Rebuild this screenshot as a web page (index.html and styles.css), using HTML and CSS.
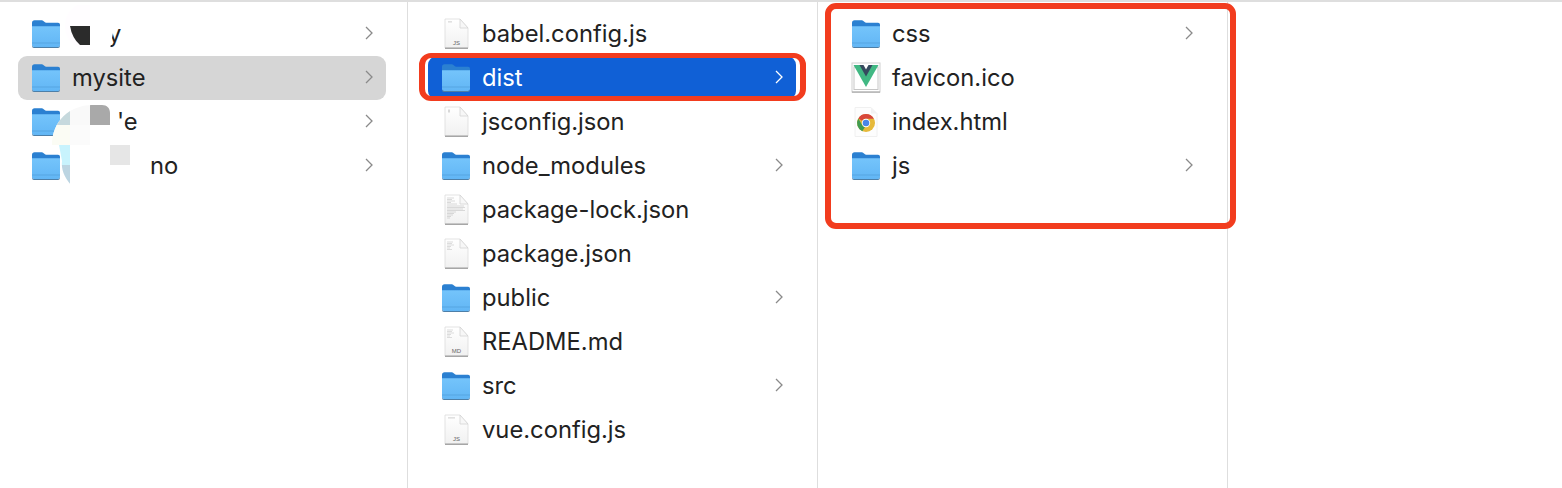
FILE: index.html
```html
<!DOCTYPE html>
<html lang="en">

<head>
    <meta charset="UTF-8">
    <meta name="viewport" content="width=device-width, initial-scale=1.0">
    <title>mysite - Finder</title>
    <link rel="stylesheet" href="styles.css">
</head>

<body>

    <svg class="defs" width="0" height="0" aria-hidden="true">
        <defs>
            <linearGradient id="folderBody" x1="0" y1="0" x2="0" y2="1">
                <stop offset="0" stop-color="#74c4fb"/>
                <stop offset="1" stop-color="#62b6f5"/>
            </linearGradient>
            <linearGradient id="pageBody" x1="0" y1="0" x2="0" y2="1">
                <stop offset="0" stop-color="#ffffff"/>
                <stop offset="1" stop-color="#f1f1f1"/>
            </linearGradient>

            <symbol id="folder" viewBox="0 0 30 29">
                <path d="M1 3.500C1 1.800 2 .8 3.500 .8H11C12.500 .8 13.500 3.300 15 3.300H27C28.200 3.300 29 4.100 29 5.500V10H1Z" fill="#2b80d1"/>
                <path d="M1 6.800H29V25.500C29 26.800 28.200 27.500 27 27.500H3C1.800 27.500 1 26.800 1 25.500Z" fill="url(#folderBody)"/>
                <rect x="1" y="23" width="28" height="1" fill="#56a5e2"/>
                <path d="M1 25.500C1 26.800 1.800 27.500 3 27.500H27C28.200 27.500 29 26.800 29 25.500V26.500C29 27.800 28.200 28.500 27 28.500H3C1.800 28.500 1 27.800 1 26.500Z" fill="#4d7fa8"/>
            </symbol>

            <symbol id="page" viewBox="0 0 26 32">
                <path d="M2 1H17L25 10V30H2Z" fill="url(#pageBody)" stroke="#dcdcdc" stroke-width="0.800"/>
                <path d="M17 1V10H25Z" fill="#f7f7f7" stroke="#d4d4d4" stroke-width="0.800"/>
                <rect x="2" y="29.500" width="23" height="1.500" fill="#a6a6a6"/>
            </symbol>

            <symbol id="lines-long" viewBox="0 0 26 32">
                <path d="M4 4H11M4 5.500H9M4 7H12M4 8.500H8M4 10H14M4 12H21M4 13.500H22M4 15H20M4 16.500H22M4 18H13M4 19.500H11M4 21H10M4 22.500H8M4 24H7" stroke="#c2c2c2" stroke-width="0.600" fill="none"/>
            </symbol>

            <symbol id="lines-short" viewBox="0 0 26 32">
                <path d="M4 4H10M4 5.500H9M4 7H11M4 8.500H8M4 10H7M4 11.500H9" stroke="#c8c8c8" stroke-width="0.600" fill="none"/>
            </symbol>

            <symbol id="chevron" viewBox="0 0 8 14">
                <path d="M1 1L7 7L1 13" fill="none" stroke="currentColor" stroke-width="1.300"/>
            </symbol>
        </defs>
    </svg>

    <main class="browser">

        <section class="column column-first">
            <div class="row">
                <svg class="icon"><use href="#folder"/></svg>
                <span class="name name-y">y</span>
                <svg class="chevron"><use href="#chevron"/></svg>
            </div>
            <div class="row row-inactive">
                <svg class="icon"><use href="#folder"/></svg>
                <span class="name">mysite</span>
                <svg class="chevron"><use href="#chevron"/></svg>
            </div>
            <div class="row">
                <svg class="icon"><use href="#folder"/></svg>
                <span class="name name-e">'e</span>
                <svg class="chevron"><use href="#chevron"/></svg>
            </div>
            <div class="row">
                <svg class="icon"><use href="#folder"/></svg>
                <span class="name name-no">no</span>
                <svg class="chevron"><use href="#chevron"/></svg>
            </div>
        </section>

        <section class="column">
            <div class="row">
                <svg class="icon" viewBox="0 0 26 32">
                    <use href="#page"/>
                    <rect x="5" y="3.500" width="4" height="0.800" fill="#c4c4c4"/>
                    <text class="badge" x="13.500" y="27" text-anchor="middle">JS</text>
                </svg>
                <span class="name">babel.config.js</span>
            </div>
            <div class="row row-active">
                <svg class="icon"><use href="#folder"/></svg>
                <span class="name">dist</span>
                <svg class="chevron"><use href="#chevron"/></svg>
            </div>
            <div class="row">
                <svg class="icon" viewBox="0 0 26 32">
                    <use href="#page"/>
                    <rect x="5" y="3.500" width="2" height="3" fill="#d8d8d8"/>
                </svg>
                <span class="name">jsconfig.json</span>
            </div>
            <div class="row">
                <svg class="icon"><use href="#folder"/></svg>
                <span class="name">node_modules</span>
                <svg class="chevron"><use href="#chevron"/></svg>
            </div>
            <div class="row">
                <svg class="icon" viewBox="0 0 26 32">
                    <use href="#page"/>
                    <use href="#lines-long"/>
                </svg>
                <span class="name">package-lock.json</span>
            </div>
            <div class="row">
                <svg class="icon" viewBox="0 0 26 32">
                    <use href="#page"/>
                    <use href="#lines-short"/>
                </svg>
                <span class="name">package.json</span>
            </div>
            <div class="row">
                <svg class="icon"><use href="#folder"/></svg>
                <span class="name">public</span>
                <svg class="chevron"><use href="#chevron"/></svg>
            </div>
            <div class="row">
                <svg class="icon" viewBox="0 0 26 32">
                    <use href="#page"/>
                    <use href="#lines-short"/>
                    <text class="badge" x="13.500" y="27" text-anchor="middle">MD</text>
                </svg>
                <span class="name">README.md</span>
            </div>
            <div class="row">
                <svg class="icon"><use href="#folder"/></svg>
                <span class="name">src</span>
                <svg class="chevron"><use href="#chevron"/></svg>
            </div>
            <div class="row">
                <svg class="icon" viewBox="0 0 26 32">
                    <use href="#page"/>
                    <rect x="5" y="3.500" width="7" height="0.800" fill="#c4c4c4"/>
                    <text class="badge" x="13.500" y="27" text-anchor="middle">JS</text>
                </svg>
                <span class="name">vue.config.js</span>
            </div>
        </section>

        <section class="column">
            <div class="row">
                <svg class="icon"><use href="#folder"/></svg>
                <span class="name">css</span>
                <svg class="chevron"><use href="#chevron"/></svg>
            </div>
            <div class="row">
                <svg class="icon" viewBox="0 0 30 32">
                    <rect x="1" y="1" width="28" height="29" fill="#fff" stroke="#cfcfcf"/>
                    <rect x="1" y="29.500" width="28" height="1.200" fill="#a8a8a8"/>
                    <rect x="3" y="5" width="24" height="22.500" fill="none" stroke="#c6c6c6"/>
                    <path d="M2.500 3H27.500L15 25Z" fill="#41b883"/>
                    <path d="M8.500 3H21.500L15 14.500Z" fill="#35495e"/>
                    <path d="M12.500 3H17.500L15 7.500Z" fill="#fff"/>
                </svg>
                <span class="name">favicon.ico</span>
            </div>
            <div class="row">
                <svg class="icon" viewBox="0 0 30 32">
                    <path d="M4 1.500H20L26 7.500V30.500H4Z" fill="#fdfdfd" stroke="#f0f0f0"/>
                    <path d="M20 1.500V7.500H26Z" fill="#f2f2f2"/>
                    <circle cx="15" cy="17" r="9" fill="#e6b93a"/>
                    <path d="M15 8A9 9 0 0 1 23 12.800H15A4.200 4.200 0 0 0 11 14.800L7.300 12.400A9 9 0 0 1 15 8Z" fill="#d8473b"/>
                    <path d="M7.300 12.400L11.300 19.300A4.200 4.200 0 0 0 14 21L11.300 25.200A9 9 0 0 1 7.300 12.400Z" fill="#3f9b52"/>
                    <circle cx="15" cy="17" r="4.200" fill="#fff"/>
                    <circle cx="15" cy="17" r="3.300" fill="#4a86e8"/>
                </svg>
                <span class="name">index.html</span>
            </div>
            <div class="row">
                <svg class="icon"><use href="#folder"/></svg>
                <span class="name">js</span>
                <svg class="chevron"><use href="#chevron"/></svg>
            </div>
        </section>

        <section class="column column-empty"></section>

        <!-- annotations drawn over the screenshot -->
        <div class="mark mark-dist"></div>
        <div class="mark mark-output"></div>

        <!-- redactions over the first column -->
        <svg class="blot blot-dark" viewBox="0 0 50 46">
            <circle cx="25" cy="21" r="24" fill="#fffdff"/>
            <path d="M6 21H26V40H16Q8 33 6 21Z" fill="#2b2b2b"/>
            <path d="M26 0H50V22L46 44H26Z" fill="#fff"/>
        </svg>
        <svg class="blot blot-mosaic" viewBox="0 0 90 80">
            <defs>
                <clipPath id="blotShape">
                    <path d="M0 40C0 16 18 0 40 0H50C55 0 58 3 58 8V20H64V40H78V60H90V68C80 76 60 80 40 80H19C12 72 9 64 10 56L7 40Z"/>
                </clipPath>
            </defs>
            <g clip-path="url(#blotShape)">
                <rect width="90" height="80" fill="#fff"/>
                <rect x="0" y="0" width="18" height="20" fill="#c6d9dd"/>
                <rect x="18" y="0" width="20" height="20" fill="#f9f9f9"/>
                <rect x="38" y="0" width="20" height="20" fill="#a9a9a9"/>
                <rect x="0" y="20" width="18" height="20" fill="#fbfcf4"/>
                <rect x="18" y="20" width="20" height="20" fill="#fbfbfb"/>
                <rect x="0" y="40" width="18" height="20" fill="#c8f3fd"/>
                <rect x="0" y="60" width="18" height="20" fill="#bcd5e2"/>
                <rect x="58" y="40" width="20" height="20" fill="#e6e6e6"/>
            </g>
        </svg>
    </main>

</body>

</html>
```

FILE: styles.css
```css
* {
    box-sizing: border-box;
}

html,
body {
    margin: 0;
    padding: 0;
    height: 100%;
    background-color: #fff;
    overflow: hidden;
}

body {
    font-family: 'Inter', 'Liberation Sans', sans-serif;
    color: #222;
}

.defs {
    position: absolute;
}

.browser {
    position: relative;
    display: grid;
    grid-template-columns: 408px 410px 410px 1fr;
    height: 488px;
    border-top: 2px solid #dedede;
}

.column {
    padding: 10px 0 0 20px;
    border-right: 1px solid #dedede;
}

.column-first {
    padding-left: 18px;
}

.column-empty {
    border-right: 0;
}

.row {
    display: flex;
    align-items: center;
    width: 368px;
    height: 44px;
    padding: 0 13px 0 13px;
    border-radius: 9px;
}

.row-inactive {
    background-color: #d6d6d6;
}

.row-active {
    background-color: #1060d6;
    color: #fff;
}

.icon {
    flex: none;
    width: 30px;
    height: 32px;
    margin-right: 11px;
}

.name {
    flex: 1;
    font-size: 23.750px;
    line-height: 44px;
}

.name-y {
    margin-left: 36px;
}

.name-e {
    margin-left: 45px;
}

.name-no {
    margin-left: 78px;
}

.chevron {
    flex: none;
    width: 8px;
    height: 14px;
    margin-bottom: 2px;
    color: #8a8a8a;
}

.row-active .chevron {
    color: #fff;
}

.badge {
    font-family: 'Liberation Sans', sans-serif;
    font-size: 6px;
    fill: #666;
}

.mark {
    position: absolute;
    border: 6px solid #f23c1e;
}

.mark-dist {
    left: 419px;
    top: 51px;
    width: 387px;
    height: 48px;
    border-width: 5px 6px;
    border-radius: 12px;
}

.mark-output {
    left: 825px;
    top: 1px;
    width: 411px;
    height: 226px;
    border-radius: 11px;
}

.blot {
    position: absolute;
}

.blot-dark {
    left: 64px;
    top: 3px;
    width: 50px;
    height: 46px;
}

.blot-mosaic {
    left: 52px;
    top: 103px;
    width: 90px;
    height: 80px;
}
```
